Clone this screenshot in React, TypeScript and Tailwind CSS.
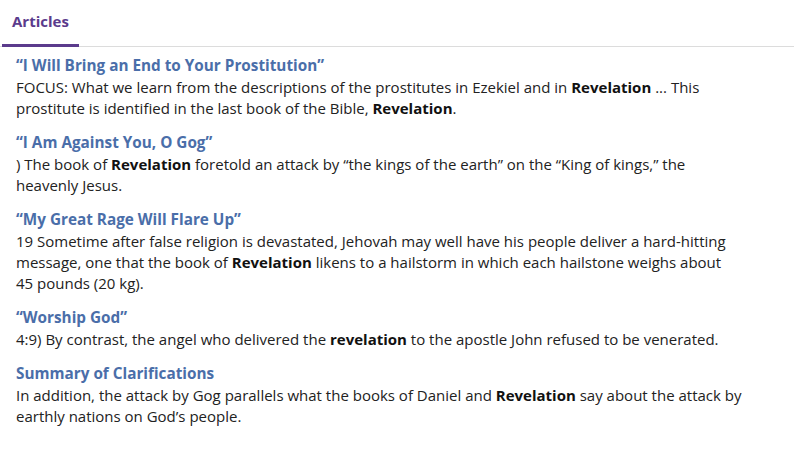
const articles = [
  {
    title: "“I Will Bring an End to Your Prostitution”",
    lines: [
      <>FOCUS: What we learn from the descriptions of the prostitutes in Ezekiel and in <b>Revelation</b> ... This</>,
      <>prostitute is identified in the last book of the Bible, <b>Revelation</b>.</>,
    ],
  },
  {
    title: "“I Am Against You, O Gog”",
    lines: [
      <>) The book of <b>Revelation</b> foretold an attack by “the kings of the earth” on the “King of kings,” the</>,
      <>heavenly Jesus.</>,
    ],
  },
  {
    title: "“My Great Rage Will Flare Up”",
    lines: [
      <>19 Sometime after false religion is devastated, Jehovah may well have his people deliver a hard-hitting</>,
      <>message, one that the book of <b>Revelation</b> likens to a hailstorm in which each hailstone weighs about</>,
      <>45 pounds (20 kg).</>,
    ],
  },
  {
    title: "“Worship God”",
    lines: [
      <>4:9) By contrast, the angel who delivered the <b>revelation</b> to the apostle John refused to be venerated.</>,
    ],
  },
  {
    title: "Summary of Clarifications",
    lines: [
      <>In addition, the attack by Gog parallels what the books of Daniel and <b>Revelation</b> say about the attack by</>,
      <>earthly nations on God’s people.</>,
    ],
  },
];

export default function App() {
  return (
    <div
      className="h-[455px] w-[794px] bg-white"
      style={{ fontFamily: '"Segoe UI", "Open Sans", sans-serif' }}
    >
      {/* Tabs */}
      <div className="flex border-b border-[#dcdcdc] pl-[2px]">
        <div className="mb-[-1px] border-b-[3px] border-[#5b3b8c] px-[10px] pb-[13px] pt-[11px] text-[15px] font-bold leading-[20px] text-[#5b3b8c]">
          Articles
        </div>
      </div>

      {/* Results */}
      <div className="flex flex-col gap-[11px] px-[16px] pt-[6px]">
        {articles.map((a) => (
          <div key={a.title}>
            <div className="text-[15.3px] font-bold leading-[24px] text-[#4a6ea9]">{a.title}</div>
            {a.lines.map((l, i) => (
              <div key={i} className="whitespace-nowrap text-[15px] leading-[21px] text-[#222] [&_b]:font-bold [&_b]:text-[#111]">
                {l}
              </div>
            ))}
          </div>
        ))}
      </div>
    </div>
  );
}
